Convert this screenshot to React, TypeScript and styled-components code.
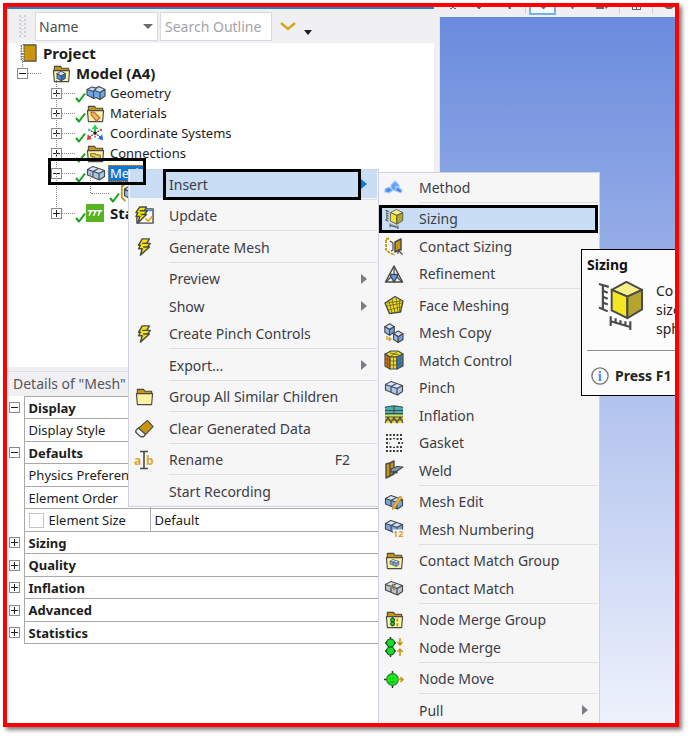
import React from "react";
import styled, { createGlobalStyle, css } from "styled-components";

const GlobalStyle = createGlobalStyle`
  * { box-sizing: border-box; }
  body { margin: 0; background: #fff; font-family: "Noto Sans", "Open Sans", sans-serif; font-size: 13px; color: #1c1c1c; }
  button, input, select { font: inherit; color: inherit; }
  ul { list-style: none; margin: 0; padding: 0; }
  svg { display: block; flex: none; }
`;

const INK = "#4a4a4a";
const GOLD = "#c8960c";
const YELLOW = "#ecdc28";

/* ---------- icons ---------- */

type IconProps = { size?: number; children?: React.ReactNode; box?: string };
const Svg = ({ size = 20, box = "0 0 20 20", children }: IconProps) => (
  <svg width={size} height={size} viewBox={box} fill="none" stroke={INK} strokeWidth="1.2" strokeLinejoin="round" aria-hidden="true">
    {children}
  </svg>
);

const BlockShape = ({ fill = "#a9c8ee" }: { fill?: string }) => (
  <>
    <path d="M1.5 6.5 7 3.5l11.5 4v6L13.5 17 1.5 12z" fill={fill} />
    <path d="M2.500 6.500 7 4.300l9.500 3.200L13 9.500z" fill="#d6e6fa" stroke="none" />
    <path d="M1.5 6.5 13 10.500l5.500-3M13 10.500V17M7 8.500l5.500-3M7 8.500v5.500" />
  </>
);
const FolderShape = () => (
  <>
    <path d="M2.500 7V2.500h6.500l1.500 2h7V7z" fill={GOLD} />
    <path d="M1.500 7h17l-1 11.500h-15z" fill="#fbf2a4" />
  </>
);
const CubeShape = ({ x = 0, y = 0, s = 1, top = "#cfe2fa", left = "#8fb9ee", right = "#6f9fe0" }) => (
  <g transform={`translate(${x} ${y}) scale(${s})`}>
    <path d="M0 3 5 0l5 3-5 3z" fill={top} />
    <path d="M0 3l5 3v6L0 9z" fill={left} />
    <path d="M10 3 5 6v6l5-3z" fill={right} />
  </g>
);

const ProjectIcon = () => (
  <Svg size={18}>
    <path d="M4 1h15v18H4z" fill={GOLD} />
    <path d="M4 1v18" stroke="#fff" strokeWidth="3" />
    <path d="M2.500 1v18M5.500 1v18" strokeDasharray="2 1" />
  </Svg>
);
const ModelIcon = () => (
  <Svg size={19}><FolderShape /><CubeShape x={5.5} y={7.5} s={0.85} left="#4f92e8" right="#2f6fc8" /></Svg>
);
const BlocksIcon = () => <Svg><BlockShape /></Svg>;
const GeometryIcon = () => (
  <Svg>
    <path d="M1 6.500 6 4l4 1 3-1.500 6 3V13l-5 3.500-4-2-2 1L1 12z" fill="#6fa8ea" />
    <path d="M2 6.500 6 4.700l3.500 1L7 8zM9 7.500l4-3 5 2-4 2.500z" fill="#c4dcf8" stroke="none" />
    <path d="M1 6.500l6.500 2L10 5.500M7.500 8.500v7M8.500 7.500l5.500 2 5-3M14 9.500v7" />
  </Svg>
);
const MaterialsIcon = () => (
  <Svg size={19}>
    <FolderShape />
    <path d="M5.500 11.500v-3h3l6 6-3.500 3.500z" fill="#f2b27a" stroke="#b86a20" />
  </Svg>
);
const AxesIcon = () => (
  <Svg size={18}>
    <path d="M10 10V4" stroke="#12c832" strokeWidth="2" /><path d="M6.500 5.500l3.500-5 3.500 5z" fill="#12e03a" stroke="none" />
    <path d="M10 10l-6 4.500M10 10l6 4.500M10 10 3 6.500M10 10l7-3.500M10 10v6" stroke="#333" strokeDasharray="2 1" />
    <path d="M2 11.500l4.500 5L1 18z" fill="#ff2a2a" stroke="none" /><path d="M18 11.500l-4.500 5L19 18z" fill="#1d64ff" stroke="none" />
    <circle cx="3.500" cy="6.500" r="1.300" fill="#28b4d8" stroke="none" /><circle cx="16.500" cy="6.500" r="1.300" fill="#e04a4a" stroke="none" />
    <circle cx="10" cy="10" r="1.800" fill="#222" stroke="none" />
  </Svg>
);
const ConnectionsIcon = () => (
  <Svg size={19}><FolderShape /><path d="M5 10h4l2 1 4 1v4h-5l-1-2-4-1z" fill="#dfc76a" stroke="#8b7420" /></Svg>
);
const StaticIcon = () => (
  <Svg size={18}>
    <path d="M0 0h20v20H0z" fill="#56b520" stroke="none" />
    <path d="M2 7.500h16M5.500 8l-2 5M10.500 8l-2 5M15.500 8l-2 5" stroke="#fff" strokeWidth="1.800" />
  </Svg>
);
const MethodChildIcon = () => (
  <Svg size={18}><path d="M5 2H2v13l4 4" stroke={GOLD} strokeWidth="2" /><CubeShape x={5} y={2} s={1.2} /></Svg>
);

const BOLT = "M8 1h8l-3 5h4l-3 4h2L6 19l2-7H4l2-4H4z";
const BoltIcon = () => (
  <Svg size={18}><path d={BOLT} fill="#f6e400" strokeWidth="1.600" /><path d="M13 6H8M14 10H9" strokeWidth="1.500" /></Svg>
);
const UpdateIcon = () => (
  <Svg size={19}>
    <path d="M3 3h16v15H2V9" fill="#fff" strokeWidth="1.500" /><path d="M10 4.500h8.500" stroke="#4a90e2" strokeWidth="2" />
    <path d="M11 13l3 3 4-5" stroke="#e9a42c" strokeWidth="2" />
    <path d="M5 1h7l-2 4h3l-3 4h2l-9 9 2-7H1l2-4H1z" fill="#f6e400" strokeWidth="1.500" /><path d="M10 5H5M10 9H6" strokeWidth="1.500" />
  </Svg>
);
const FolderIcon = () => <Svg size={19}><FolderShape /></Svg>;
const EraserIcon = () => (
  <Svg size={19}>
    <path d="M13 1.500 19 8 9 18.500 6 18.500 1 14V12z" fill={GOLD} />
    <path d="M3.500 9.500 11 16 9 18.500H6L1 14V12z" fill="#f4f4f4" />
  </Svg>
);
const RenameText = styled.text`
  font: 700 12px "Noto Sans", sans-serif;
  fill: #dba72e;
  stroke: none;
`;
const RenameIcon = () => (
  <Svg size={20}>
    <RenameText x="0" y="15">a</RenameText><RenameText x="12" y="15">b</RenameText>
    <path d="M6 1.500h8M6 18.500h8M10 1.500v17" strokeWidth="1.600" />
  </Svg>
);

const MethodIcon = () => (
  <Svg>
    <path d="M7 8l4-4 4 4v5l-4 1-4-2z" fill="#5fa2f5" stroke="#a8ccfa" />
    <path d="M1 12l4-2 4 3-4 3-4-1z" fill="#4c93f0" stroke="#a8ccfa" />
    <path d="M12 9l6 4-1 3-5-2z" fill="#3f86ea" stroke="#a8ccfa" />
  </Svg>
);
const SizingIcon = ({ size = 20 }: { size?: number }) => (
  <Svg size={size} box="0 0 48 50">
    <g strokeWidth="2">
      <path d="M15 9 30 1l16 8-15 7z" fill="#f8f086" />
      <path d="M15 9l16 7v22L15 30z" fill="#f5e622" />
      <path d="M46 9 31 16v22l15-9z" fill="#b5a52c" />
      <path d="M2 3l10 3M2 27l9 4M6 4v25M6 10l5 2M6 16l5 2M6 22l5 2M14 36v10M34 41v11M14 41l20 6M19 38v5M24 40v5M29 41v5" strokeWidth="2.200" />
    </g>
  </Svg>
);
const ContactSizingIcon = () => (
  <Svg>
    <path d="M5 2.500 2 3v11l4 3 5 2" stroke={GOLD} strokeWidth="1.800" strokeDasharray="3 1" />
    <path d="M6 5l3 2v7l-2 1" /><path d="M11 6l6-3v10l-6 3z" fill={GOLD} strokeWidth="1.500" /><path d="M14 14l4.500 4.500M14 18v-4h4" />
  </Svg>
);
const RefinementIcon = () => (
  <Svg>
    <path d="M10 2l8.500 16h-17z" fill="#eef3fa" strokeWidth="1.500" />
    <path d="M5.800 10.500h8.400L10 18z" fill="#5ea2f4" strokeWidth="1.500" />
    <path d="M10 2v8M2 18l5-5M18 18l-5-5" />
  </Svg>
);
const FaceMeshIcon = () => (
  <Svg>
    <path d="M1 8 11 1.500 19 6l-2.500 11-11 1.500z" fill={YELLOW} strokeWidth="1.400" />
    <path d="M3 11l15-3M4 15l13-3M5 6l3 12M8 4l3 14M12 3l2 14M15.500 5v12M3 8l14-2" stroke="#7d751c" strokeWidth="1" />
  </Svg>
);
const MeshCopyIcon = () => (
  <Svg>
    <CubeShape x={0.8} y={0.8} s={0.95} /><CubeShape x={9.5} y={8} s={0.95} />
    <path d="M3 13v3h4M5 14l2 2-2 2" stroke="#e2a42c" strokeWidth="1.500" />
  </Svg>
);
const MatchIcon = () => (
  <Svg>
    <path d="M1 4l6-3h7l5 3-5 3H6z" fill={YELLOW} /><path d="M1 4l5 3v12l-5-3z" fill="#d97a1c" />
    <path d="M6 7h7v12H6z" fill={YELLOW} /><path d="M13 7l6-3v12l-6 3z" fill="#2d84dc" />
    <path d="M1 8l5 3h7l6-3M1 12l5 3h7l6-3M9.500 7v12M16 5.500v12M3.500 5.500v12M6 3l9 2M13 2 7 6" stroke="#5d5828" strokeWidth="0.800" />
  </Svg>
);
const InflationIcon = () => (
  <Svg>
    <path d="M1 2c5-2 13-2 18 0v8H1z" fill="#48aeb0" stroke="none" /><path d="M1 10h18v8H1z" fill={YELLOW} stroke="none" />
    <path d="M1 2.500c5-2 13-2 18 0M1 5.500h18M1 8.500h18M10 1v8M1 18l3-6 3 6 3-6 3 6 3-6 3 6M1 12h18M1 15h18" strokeWidth="1.100" />
  </Svg>
);
const GasketIcon = () => (
  <Svg>
    <path d="M2 2h17M2 18h17M2 6h17M2 14h17M2 10h4M14 10h5" strokeDasharray="2 1.500" strokeWidth="2" stroke="#3c3c3c" />
    <path d="M6 10l1-3 3-1 3 1 1 3-1 3-3 1-3-1z" fill="#f6f6f6" stroke="none" />
  </Svg>
);
const WeldIcon = () => (
  <Svg>
    <path d="M2 4l4-1v13l-4 2zM6 3l4-2v13l-4 2z" fill={GOLD} strokeWidth="1.400" />
    <path d="M7 9l6-2.500 6 .5-6 4-6 1z" fill="#7f9fc4" /><path d="M8 13l5-2v2z" fill={INK} />
  </Svg>
);
const MeshEditIcon = () => (
  <Svg><BlockShape fill="#7ba8de" /><path d="M16 4l2 1.500-7 10-2.500 2 .5-3.500z" fill="#efb92c" stroke="#c8922c" strokeWidth="1" /></Svg>
);
const NumberText = styled.text`
  font: 700 9px "Noto Sans", sans-serif;
  fill: #dba01e;
  stroke: none;
`;
const NumberingIcon = () => (
  <Svg><g transform="translate(0 -2)"><BlockShape fill="#7ba8de" /></g><path d="M9 10.500h11V20H9z" fill="#f6f6f6" stroke="none" /><NumberText x="9" y="18">12</NumberText></Svg>
);
const MatchGroupIcon = () => (
  <Svg size={19}><FolderShape /><g transform="translate(4.500 7) scale(.55)"><BlockShape fill="#7fb0ee" /></g></Svg>
);
const ContactMatchIcon = () => (
  <Svg><BlockShape fill="#b9c3cf" /><path d="M6 8l5 4M8 6l4 4" stroke="#9c8c4c" strokeWidth="1.500" /></Svg>
);
const MergeGroupIcon = () => (
  <Svg size={19}>
    <FolderShape /><path d="M8 8v9" stroke="#165a20" /><circle cx="8" cy="10.500" r="2" fill="#18d038" stroke="#165a20" /><circle cx="8" cy="14.500" r="2" fill="#18d038" stroke="#165a20" />
    <path d="M13 9v3M13 14v3" stroke={GOLD} strokeWidth="2" />
  </Svg>
);
const MergeIcon = () => (
  <Svg>
    <path d="M6.500 0v20M1 6h11M1 14h11" stroke="#333" strokeWidth="1.500" />
    <circle cx="6.500" cy="6" r="4" fill="#12e028" stroke="#1b5a24" /><circle cx="6.500" cy="14" r="4" fill="#12e028" stroke="#1b5a24" />
    <path d="M16 1v6M13.500 5l2.500 3 2.500-3M16 19v-6M13.500 15l2.500-3 2.500 3" stroke={GOLD} strokeWidth="1.500" />
  </Svg>
);
const MoveIcon = () => (
  <Svg>
    <path d="M8.500 2v17M0 10.500h15" stroke="#333" strokeWidth="1.500" /><circle cx="8.500" cy="10.500" r="5.800" fill="#12ee18" stroke="#2a7a2c" />
    <path d="M6 9v1M9 9v1M5.500 13h5" stroke="#1a8a22" /><path d="M13 10.500h6M16.500 8l2.500 2.500-2.500 2.500" stroke={GOLD} strokeWidth="1.600" />
  </Svg>
);
const InfoText = styled.text`
  font: 700 16px "Liberation Serif", serif;
  fill: #3b8ef0;
  stroke: none;
`;
const InfoIcon = () => (
  <Svg size={18}><circle cx="10" cy="10" r="9" fill="#fff" stroke="#777" strokeWidth="1.500" /><InfoText x="7.500" y="15">i</InfoText></Svg>
);
const CheckIcon = () => (
  <Svg size={11} box="0 0 11 11"><path d="M1 6l3 3.500L10 1.500" stroke="#16a01c" strokeWidth="2" /></Svg>
);
const ArrowRight = ({ color }: { color: string }) => (
  <svg width="6" height="10" viewBox="0 0 6 10" aria-hidden="true"><path d="M0 0l6 5-6 5z" fill={color} /></svg>
);
const Caret = ({ color = "#6a6a6a", width = 10 }: { color?: string; width?: number }) => (
  <svg width={width} height="5" viewBox="0 0 10 5" preserveAspectRatio="none" aria-hidden="true"><path d="M0 0h10L5 5z" fill={color} /></svg>
);
const Chevron = () => (
  <svg width="16" height="9" viewBox="0 0 16 9" fill="none" aria-hidden="true"><path d="M1 1l7 6 7-6" stroke="#d3a41c" strokeWidth="2.400" /></svg>
);
const Grip = () => (
  <svg width="8" height="22" viewBox="0 0 8 22" aria-hidden="true">
    {[0, 4, 8, 12, 16, 20].map((y) => (
      <g key={y} fill="#cfcfd4"><rect x="0" y={y} width="2" height="2" /><rect x="5" y={y} width="2" height="2" /><rect x="2" y={y + 2} width="2" height="1" /></g>
    ))}
  </svg>
);

/* ---------- frame ---------- */

const Frame = styled.main`
  position: relative;
  display: grid;
  grid-template-columns: 427px minmax(0, 1fr);
  gap: 5px;
  min-height: calc(100vh - 12px);
  margin: 3px 9px 9px 3px;
  border: 4px solid #fe0000;
  background: #f0f0f2;
  box-shadow: 3px 3px 4px rgba(0, 0, 0, 0.5);
  overflow: hidden;
`;
const Dock = styled.section`
  display: flex;
  flex-direction: column;
  border-top: 2px solid #1b83cc;
`;
const Viewport = styled.section`
  display: flex;
  flex-direction: column;
`;
const Canvas = styled.div`
  flex: 1;
  border-left: 1px solid #dfe3f2;
  background: linear-gradient(#6a8bdd, #eef2fc);
`;

const ViewTools = styled.div`
  display: flex;
  align-items: flex-start;
  justify-content: space-between;
  height: 10px;
  margin-right: -8px;
  padding-left: 10px;
`;
const ViewButton = styled.button<{ $active?: boolean }>`
  display: flex;
  justify-content: center;
  width: 27px;
  height: 8px;
  padding: 0;
  border: solid ${(p) => (p.$active ? "#6fb2ee" : "transparent")};
  border-width: 0 2px 2px;
  background: ${(p) => (p.$active ? "#f8fbff" : "none")};
`;
const ViewDivider = styled.span`
  width: 1px;
  height: 7px;
  background: #cfcfd4;
`;
const Stub = ({ d }: { d: string }) => (
  <svg width="14" height="4" viewBox="0 0 14 4" aria-hidden="true"><path d={d} fill="#66666c" /></svg>
);

/* ---------- outline toolbar ---------- */

const Toolbar = styled.div`
  display: flex;
  align-items: center;
  gap: 2px;
  height: 34px;
  padding: 0 12px;
`;
const SelectWrap = styled.div`
  display: flex;
  align-items: center;
  width: 123px;
  margin-left: 6px;
  border: 1px solid #d9d9e6;
  background: #fff;
  padding-right: 4px;
`;
const FilterSelect = styled.select`
  flex: 1;
  height: 27px;
  padding: 0 3px;
  border: 0;
  appearance: none;
  background: none;
  font-size: 14px;
  color: #4b4b50;
`;
const SearchInput = styled.input`
  width: 112px;
  height: 29px;
  padding: 0 4px;
  border: 1px solid #d9d9e6;
  background: #fff;
  font-size: 14px;
  &::placeholder { color: #a3a3a8; opacity: 1; }
`;
const ToolButton = styled.button<{ $low?: boolean }>`
  display: flex;
  padding: ${(p) => (p.$low ? "12px 0 0" : "0 6px")};
  border: 0;
  background: none;
`;

/* ---------- tree ---------- */

const TreePane = styled.nav`
  height: 324px;
  padding-left: 10px;
  background: #fff;
`;
const TreeRow = styled.li<{ $depth: number }>`
  position: relative;
  display: flex;
  align-items: center;
  height: 20px;
  padding-left: ${(p) => [2, 0, 34, 74][p.$depth]}px;
`;
const Expander = styled.button`
  position: relative;
  display: grid;
  place-items: center;
  flex: none;
  width: 11px;
  height: 11px;
  padding: 0;
  border: 1px solid #8a8a8a;
  background: #fff;
`;
const PlusMinus = ({ open }: { open?: boolean }) => (
  <svg width="7" height="7" viewBox="0 0 7 7" aria-hidden="true"><path d={open ? "M0 3h7v1H0z" : "M0 3h3V0h1v3h3v1H4v3H3V4H0z"} fill="#222" /></svg>
);
const Dots = styled.span<{ $wide?: boolean }>`
  width: ${(p) => (p.$wide ? 18 : 13)}px;
  border-top: 1px dotted #8c8c8c;
`;
const Trunk = styled.span<{ $x: number; $rows: number }>`
  position: absolute;
  left: ${(p) => p.$x}px;
  bottom: 10px;
  height: ${(p) => p.$rows * 20}px;
  border-left: 1px dotted #8c8c8c;
`;
const Status = styled.span`
  display: flex;
  align-self: flex-end;
  width: 11px;
  height: 11px;
`;
const TreeIcon = styled.span<{ $gap?: number }>`
  display: grid;
  place-items: center;
  width: 18px;
  margin-left: ${(p) => p.$gap ?? 0}px;
  margin-right: 4px;
`;
const TreeLabel = styled.span<{ $bold?: boolean; $selected?: boolean }>`
  padding: 0 2px;
  line-height: 17px;
  font-size: ${(p) => (p.$bold ? 15 : 13)}px;
  font-weight: ${(p) => (p.$bold ? 700 : 400)};
  ${(p) => p.$selected && css`background: #0b78d7; color: #fff; outline: 1px dotted #d88a3c; outline-offset: -1px;`}
`;

/* ---------- details ---------- */

const DetailsTitle = styled.h2`
  margin: 4px 0 0;
  height: 25px;
  padding: 0 6px;
  border-top: 1px solid #dcdce6;
  font-size: 14px;
  line-height: 24px;
  font-weight: 400;
  color: #55555a;
`;
const DetailsPane = styled.div`
  flex: 1;
  background: #fff;
`;
const DetailsTable = styled.table`
  width: 100%;
  table-layout: fixed;
  border-collapse: collapse;
`;
const Line = styled.tr`
  height: 22px;
  &:nth-child(even) { height: 23px; }
`;
const Gutter = styled.td`
  padding: 0 0 0 2px;
`;
const cell = css`
  padding: 0 4px;
  border: 1px solid #a9a9a9;
  text-align: left;
  line-height: 18px;
  white-space: nowrap;
  overflow: hidden;
`;
const GroupCell = styled.th`${cell} font-weight: 700;`;
const NameCell = styled.th`${cell} font-weight: 400;`;
const ValueCell = styled.td`${cell}`;
const CheckLabel = styled.label`
  display: flex;
  align-items: center;
  gap: 5px;
`;
const Checkbox = styled.input`
  appearance: none;
  width: 15px;
  height: 15px;
  margin: 0;
  border: 1px solid #c4c4c4;
  background: #fff;
`;

/* ---------- menus ---------- */

const Menu = styled.div<{ $left: number; $top: number; $width: number }>`
  position: absolute;
  left: ${(p) => p.$left}px;
  top: ${(p) => p.$top}px;
  width: ${(p) => p.$width}px;
  display: flex;
  flex-direction: column;
  padding: 0 1px 1px;
  border: 1px solid #cdd3e2;
  background: #f6f6f6;
`;
const MenuItem = styled.button<{ $active?: boolean }>`
  display: grid;
  grid-template-columns: 28px 1fr auto 16px;
  column-gap: 11px;
  align-items: center;
  flex: none;
  height: 28px;
  padding: 0;
  border: 0;
  text-align: left;
  font-size: 14px;
  color: #3c3c46;
  background: ${(p) => (p.$active ? "#c9def5" : "none")};
  &:nth-of-type(even) { height: 27px; }
`;
const MenuIcon = styled.span`
  display: grid;
  place-items: center;
`;
const Separator = styled.hr`
  flex: none;
  align-self: stretch;
  height: 1px;
  margin: 1px 0 2px 39px;
  border: 0;
  background: #dcdfe5;
`;
const Marker = styled.span<{ $x: number; $y: number; $w: number; $h: number }>`
  position: absolute;
  left: ${(p) => p.$x}px;
  top: ${(p) => p.$y}px;
  width: ${(p) => p.$w}px;
  height: ${(p) => p.$h}px;
  border: 3px solid #000;
  pointer-events: none;
`;

/* ---------- tooltip ---------- */

const Tooltip = styled.aside`
  position: absolute;
  left: 574px;
  top: 242px;
  width: 130px;
  padding: 5px;
  border: 1px solid #000;
  background: #fcfcfc;
  color: #222;
`;
const TipTitle = styled.strong`
  display: block;
  line-height: 20px;
  font-size: 14px;
  color: #111;
`;
const TipBody = styled.div`
  display: flex;
  gap: 11px;
  height: 68px;
  padding: 6px 0 0 9px;
`;
const TipText = styled.p`
  margin: 0;
  line-height: 19px;
  font-size: 14px;
`;
const TipFoot = styled.div`
  display: flex;
  align-items: center;
  gap: 6px;
  height: 40px;
  margin-top: 7px;
  padding: 10px 4px 0;
  border-top: 1px solid #8c8c8c;
  font-size: 14px;
  font-weight: 700;
`;

type Entry = { label: string; icon?: React.ReactNode; keys?: string; sub?: boolean; active?: boolean; rule?: boolean };

const mainMenu: Entry[] = [
  { label: "Insert", sub: true, active: true, rule: true },
  { label: "Update", icon: <UpdateIcon />, rule: true },
  { label: "Generate Mesh", icon: <BoltIcon />, rule: true },
  { label: "Preview", sub: true },
  { label: "Show", sub: true },
  { label: "Create Pinch Controls", icon: <BoltIcon />, rule: true },
  { label: "Export...", sub: true, rule: true },
  { label: "Group All Similar Children", icon: <FolderIcon />, rule: true },
  { label: "Clear Generated Data", icon: <EraserIcon />, rule: true },
  { label: "Rename", icon: <RenameIcon />, keys: "F2", rule: true },
  { label: "Start Recording" },
];

const insertMenu: Entry[] = [
  { label: "Method", icon: <MethodIcon />, rule: true },
  { label: "Sizing", icon: <SizingIcon />, active: true },
  { label: "Contact Sizing", icon: <ContactSizingIcon /> },
  { label: "Refinement", icon: <RefinementIcon />, rule: true },
  { label: "Face Meshing", icon: <FaceMeshIcon /> },
  { label: "Mesh Copy", icon: <MeshCopyIcon /> },
  { label: "Match Control", icon: <MatchIcon /> },
  { label: "Pinch", icon: <BlocksIcon /> },
  { label: "Inflation", icon: <InflationIcon /> },
  { label: "Gasket", icon: <GasketIcon /> },
  { label: "Weld", icon: <WeldIcon />, rule: true },
  { label: "Mesh Edit", icon: <MeshEditIcon /> },
  { label: "Mesh Numbering", icon: <NumberingIcon />, rule: true },
  { label: "Contact Match Group", icon: <MatchGroupIcon /> },
  { label: "Contact Match", icon: <ContactMatchIcon />, rule: true },
  { label: "Node Merge Group", icon: <MergeGroupIcon /> },
  { label: "Node Merge", icon: <MergeIcon />, rule: true },
  { label: "Node Move", icon: <MoveIcon />, rule: true },
  { label: "Pull", sub: true },
];

const MenuEntries = ({ entries }: { entries: Entry[] }) => (
  <>
    {entries.map((e) => (
      <React.Fragment key={e.label}>
        <MenuItem type="button" role="menuitem" $active={e.active}>
          <MenuIcon>{e.icon}</MenuIcon>
          <span>{e.label}</span>
          <span>{e.keys}</span>
          {e.sub ? <ArrowRight color={e.active ? "#0b78d7" : "#7a7d84"} /> : <span />}
        </MenuItem>
        {e.rule && <Separator />}
      </React.Fragment>
    ))}
  </>
);

const branches = [
  { label: "Geometry", icon: <GeometryIcon /> },
  { label: "Materials", icon: <MaterialsIcon /> },
  { label: "Coordinate Systems", icon: <AxesIcon /> },
  { label: "Connections", icon: <ConnectionsIcon /> },
  { label: "Mesh", icon: <BlocksIcon />, open: true, selected: true },
];

const details: { label: string; group?: boolean; open?: boolean; check?: boolean; value?: string }[] = [
  { label: "Display", group: true, open: true },
  { label: "Display Style" },
  { label: "Defaults", group: true, open: true },
  { label: "Physics Preference" },
  { label: "Element Order" },
  { label: "Element Size", check: true, value: "Default" },
  { label: "Sizing", group: true },
  { label: "Quality", group: true },
  { label: "Inflation", group: true },
  { label: "Advanced", group: true },
  { label: "Statistics", group: true },
];

export default function App() {
  return (
    <>
      <GlobalStyle />
      <Frame>
        <Dock>
          <Toolbar>
            <Grip />
            <SelectWrap>
              <FilterSelect aria-label="Filter by"><option>Name</option></FilterSelect>
              <Caret />
            </SelectWrap>
            <SearchInput aria-label="Search Outline" placeholder="Search Outline" />
            <ToolButton type="button" aria-label="Expand"><Chevron /></ToolButton>
            <ToolButton type="button" aria-label="Options" $low><Caret color="#1c1c28" width={8} /></ToolButton>
          </Toolbar>
          <TreePane aria-label="Outline">
            <ul>
              <TreeRow $depth={0}>
                <TreeIcon><ProjectIcon /></TreeIcon>
                <TreeLabel $bold>Project</TreeLabel>
              </TreeRow>
              <TreeRow $depth={1}>
                <Trunk $x={5} $rows={1} />
                <Expander type="button" aria-label="Collapse Model"><PlusMinus open /></Expander>
                <Dots />
                <TreeIcon $gap={11}><ModelIcon /></TreeIcon>
                <TreeLabel $bold>Model (A4)</TreeLabel>
              </TreeRow>
              {branches.map((b) => (
                <TreeRow key={b.label} $depth={2}>
                  <Trunk $x={39} $rows={1} />
                  <Expander type="button" aria-label={`Toggle ${b.label}`}><PlusMinus open={b.open} /></Expander>
                  <Dots />
                  <Status><CheckIcon /></Status>
                  <TreeIcon>{b.icon}</TreeIcon>
                  <TreeLabel $selected={b.selected}>{b.label}</TreeLabel>
                </TreeRow>
              ))}
              <TreeRow $depth={3}>
                <Trunk $x={73} $rows={1} />
                <Dots $wide />
                <Status><CheckIcon /></Status>
                <TreeIcon><MethodChildIcon /></TreeIcon>
              </TreeRow>
              <TreeRow $depth={2}>
                <Trunk $x={39} $rows={2} />
                <Expander type="button" aria-label="Expand Static Structural"><PlusMinus /></Expander>
                <Dots />
                <Status><CheckIcon /></Status>
                <TreeIcon><StaticIcon /></TreeIcon>
                <TreeLabel $bold>Sta</TreeLabel>
              </TreeRow>
            </ul>
          </TreePane>
          <DetailsTitle>Details of "Mesh"</DetailsTitle>
          <DetailsPane>
            <DetailsTable>
              <colgroup><col width="17" /><col width="126" /><col /></colgroup>
              <tbody>
                {details.map((d) => (
                  <Line key={d.label}>
                    <Gutter>
                      {d.group && <Expander type="button" aria-label={`Toggle ${d.label}`}><PlusMinus open={d.open} /></Expander>}
                    </Gutter>
                    {d.group ? (
                      <GroupCell colSpan={2}>{d.label}</GroupCell>
                    ) : (
                      <>
                        <NameCell scope="row">
                          {d.check ? <CheckLabel><Checkbox type="checkbox" />{d.label}</CheckLabel> : d.label}
                        </NameCell>
                        <ValueCell>{d.value}</ValueCell>
                      </>
                    )}
                  </Line>
                ))}
              </tbody>
            </DetailsTable>
          </DetailsPane>
        </Dock>

        <Viewport>
          <ViewTools>
            <Stub d="M1 1h2v1H1zM5 1h2v1H5zM3 0h2v1H3z" />
            <ViewButton type="button" aria-label="Undo view"><Stub d="M5 0h4v1H8v1H6V1H5z" /></ViewButton>
            <ViewButton type="button" aria-label="Redo view"><Stub d="M6 0h3v2H7z" /></ViewButton>
            <ViewDivider />
            <ViewButton type="button" aria-label="Rotate" $active><Stub d="M5 0h5L8 2H7z" /></ViewButton>
            <ViewButton type="button" aria-label="Pan"><Stub d="M6 0h3L8 2H7z" /></ViewButton>
            <ViewButton type="button" aria-label="Zoom"><Stub d="M1 0h8v2H1zM10 0h3l-2 2z" /></ViewButton>
            <ViewDivider />
            <ViewButton type="button" aria-label="Box zoom"><Stub d="M3 0h1v2h3V0h1v2h3V0h1v3H3z" /></ViewButton>
            <ViewDivider />
            <ViewButton type="button" aria-label="Fit"><Stub d="M2 0h10L9 2H5z" /></ViewButton>
          </ViewTools>
          <Canvas />
        </Viewport>

        <Menu role="menu" aria-label="Mesh" $left={121} $top={162} $width={251}>
          <MenuEntries entries={mainMenu} />
          <Marker $x={34} $y={-1} $w={198} $h={31} />
        </Menu>
        <Menu role="menu" aria-label="Insert" $left={371} $top={165} $width={222}>
          <MenuEntries entries={insertMenu} />
          <Marker $x={0} $y={32} $w={219} $h={28} />
        </Menu>
        <Marker $x={41} $y={151} $w={98} $h={27} />

        <Tooltip role="tooltip">
          <TipTitle>Sizing</TipTitle>
          <TipBody>
            <SizingIcon size={49} />
            <TipText>Co<br />size<br />sph</TipText>
          </TipBody>
          <TipFoot><InfoIcon />Press F1</TipFoot>
        </Tooltip>
      </Frame>
    </>
  );
}
